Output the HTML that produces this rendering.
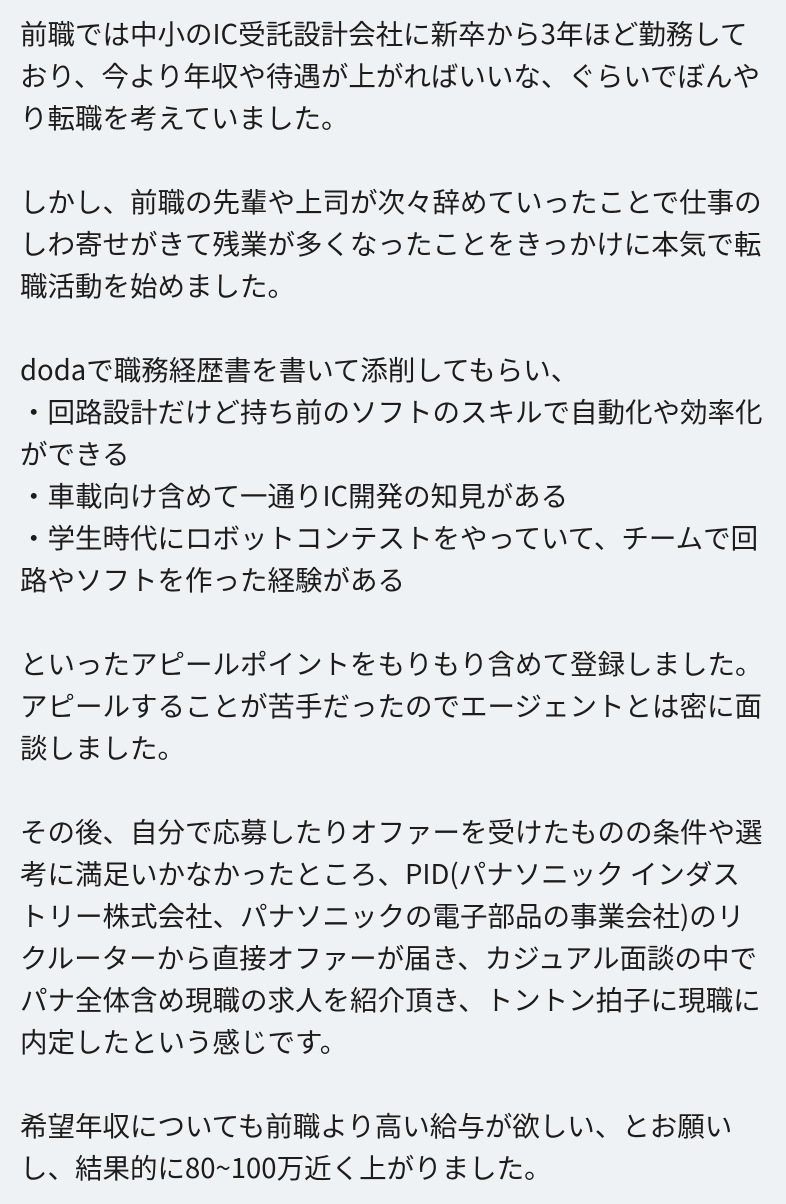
<!DOCTYPE html>
<html><head><meta charset="utf-8"><style>
html,body{margin:0;padding:0;background:#eff2f4;width:786px;height:1204px;overflow:hidden}
.t{position:absolute;left:20px;top:11px;font-family:"Noto Sans CJK JP",sans-serif;font-size:27.5px;line-height:42px;color:#1c1c1c;white-space:nowrap}
</style></head><body><div class="t">
前職では中小のIC受託設計会社に新卒から3年ほど勤務して<br>
おり、今より年収や待遇が上がればいいな、ぐらいでぼんや<br>
り転職を考えていました。<br>
<br>
しかし、前職の先輩や上司が次々辞めていったことで仕事の<br>
しわ寄せがきて残業が多くなったことをきっかけに本気で転<br>
職活動を始めました。<br>
<br>
dodaで職務経歴書を書いて添削してもらい、<br>
・回路設計だけど持ち前のソフトのスキルで自動化や効率化<br>
ができる<br>
・車載向け含めて一通りIC開発の知見がある<br>
・学生時代にロボットコンテストをやっていて、チームで回<br>
路やソフトを作った経験がある<br>
<br>
といったアピールポイントをもりもり含めて登録しました。<br>
アピールすることが苦手だったのでエージェントとは密に面<br>
談しました。<br>
<br>
その後、自分で応募したりオファーを受けたものの条件や選<br>
考に満足いかなかったところ、PID(パナソニック インダス<br>
トリー株式会社、パナソニックの電子部品の事業会社)のリ<br>
クルーターから直接オファーが届き、カジュアル面談の中で<br>
パナ全体含め現職の求人を紹介頂き、トントン拍子に現職に<br>
内定したという感じです。<br>
<br>
希望年収についても前職より高い給与が欲しい、とお願い<br>
し、結果的に80~100万近く上がりました。
</div></body></html>
